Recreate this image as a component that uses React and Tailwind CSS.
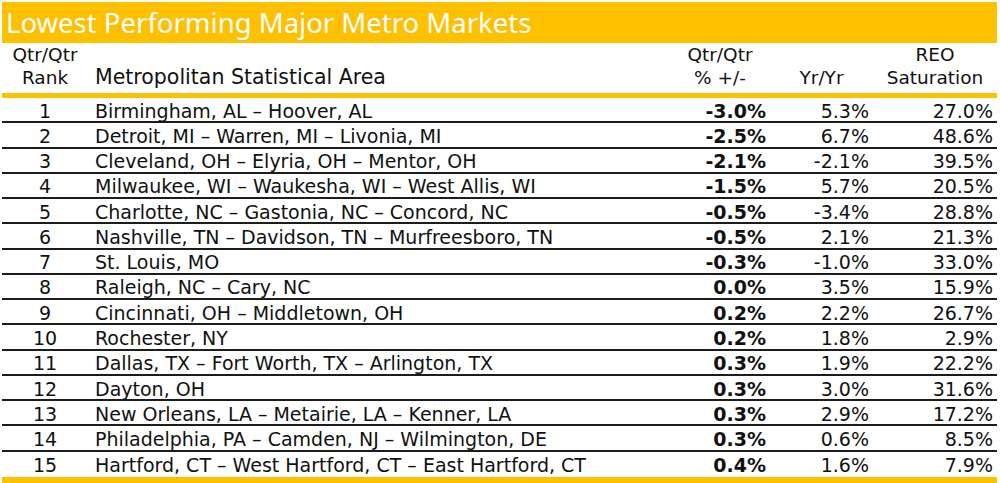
import React from "react";

const rows = [
  ["1", "Birmingham, AL – Hoover, AL", "-3.0%", "5.3%", "27.0%"],
  ["2", "Detroit, MI – Warren, MI – Livonia, MI", "-2.5%", "6.7%", "48.6%"],
  ["3", "Cleveland, OH – Elyria, OH – Mentor, OH", "-2.1%", "-2.1%", "39.5%"],
  ["4", "Milwaukee, WI – Waukesha, WI – West Allis, WI", "-1.5%", "5.7%", "20.5%"],
  ["5", "Charlotte, NC – Gastonia, NC – Concord, NC", "-0.5%", "-3.4%", "28.8%"],
  ["6", "Nashville, TN – Davidson, TN – Murfreesboro, TN", "-0.5%", "2.1%", "21.3%"],
  ["7", "St. Louis, MO", "-0.3%", "-1.0%", "33.0%"],
  ["8", "Raleigh, NC – Cary, NC", "0.0%", "3.5%", "15.9%"],
  ["9", "Cincinnati, OH – Middletown, OH", "0.2%", "2.2%", "26.7%"],
  ["10", "Rochester, NY", "0.2%", "1.8%", "2.9%"],
  ["11", "Dallas, TX – Fort Worth, TX – Arlington, TX", "0.3%", "1.9%", "22.2%"],
  ["12", "Dayton, OH", "0.3%", "3.0%", "31.6%"],
  ["13", "New Orleans, LA – Metairie, LA – Kenner, LA", "0.3%", "2.9%", "17.2%"],
  ["14", "Philadelphia, PA – Camden, NJ – Wilmington, DE", "0.3%", "0.6%", "8.5%"],
  ["15", "Hartford, CT – West Hartford, CT – East Hartford, CT", "0.4%", "1.6%", "7.9%"],
];

function Row({ r, last }) {
  return (
    <div
      className={`flex h-[25.27px] items-center pt-[3px] leading-none text-[19px] text-[#111] ${
        last ? "" : "border-b-2 border-[#1c1c1c]"
      }`}
    >
      <div className="w-[86px] text-center">{r[0]}</div>
      <div className="flex-1 pl-[7px] whitespace-nowrap">{r[1]}</div>
      <div className="w-[100px] text-right pr-[4px] font-bold">{r[2]}</div>
      <div className="w-[103px] text-right pr-[4px]">{r[3]}</div>
      <div className="w-[124px] text-right pr-[4px]">{r[4]}</div>
    </div>
  );
}

export default function App() {
  return (
    <div
      className="w-[1000px] h-[483px] bg-white pt-[2px] px-[2px] overflow-hidden"
      style={{ fontFamily: '"DejaVu Sans", sans-serif' }}
    >
      <div className="w-[995px]">
        {/* title bar */}
        <div className="h-[41px] bg-[#ffc000] flex items-center pl-[4px]">
          <h1
            className="text-white text-[27.5px] leading-none"
            style={{ fontFamily: '"Noto Sans", sans-serif' }}
          >
            Lowest Performing Major Metro Markets
          </h1>
        </div>

        {/* header */}
        <div className="h-[55px] flex items-end pb-[4px] border-b-[5px] border-[#ffc000] text-[18.5px] leading-[23px] text-[#111]">
          <div className="w-[86px] text-center">
            Qtr/Qtr
            <br />
            Rank
          </div>
          <div className="flex-1 pl-[7px] text-[20.5px]">Metropolitan Statistical Area</div>
          <div className="w-[100px] text-center">
            Qtr/Qtr
            <br />
            % +/-
          </div>
          <div className="w-[103px] text-center">Yr/Yr</div>
          <div className="w-[124px] text-center">
            REO
            <br />
            Saturation
          </div>
        </div>

        {rows.map((r, i) => (
          <Row key={r[0]} r={r} last={i === rows.length - 1} />
        ))}

        <div className="h-[6px] bg-[#ffc000]" />
      </div>
    </div>
  );
}
